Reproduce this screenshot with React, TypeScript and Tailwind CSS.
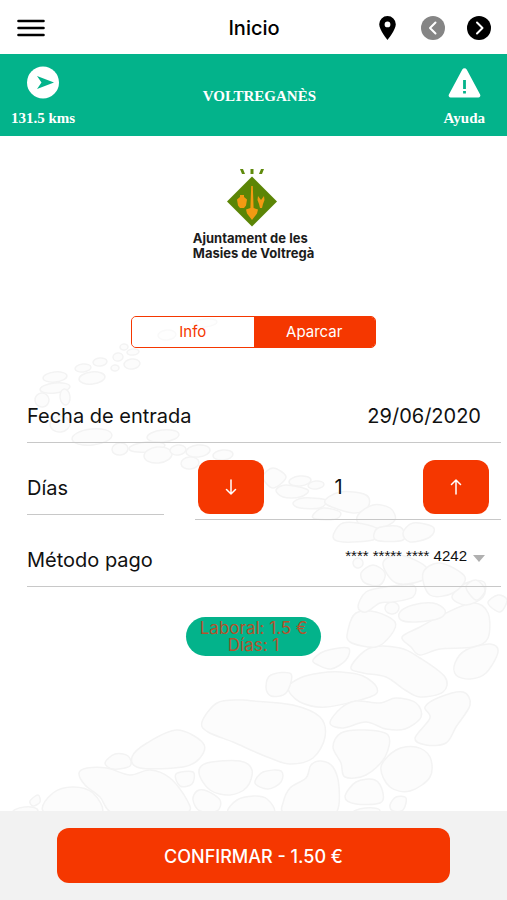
import { useState } from "react";

type Point = [number, number];

// Outlines of the larger stones of the path, as "x,y x,y ..." lists.
const STONES = [
  "288,688 300,678 320,673 341,672 363,676 377,688 370,697 326,707 300,702",
  "351,667 370,648 400,648 420,658 445,677 443,692 420,697 405,690 386,677 363,673",
  "330,723 341,708 356,701 380,703 396,698 416,703 421,717 405,729 386,729 366,722 343,728",
  "202,722 217,703 240,700 254,701 293,705 320,717 325,737 313,758 290,764 270,758 253,751 233,742 208,732",
  "333,747 341,733 363,730 388,735 385,757 366,775 345,777 341,763",
  "381,767 396,750 416,747 430,757 430,777 410,791 390,787",
  "425,707 440,697 463,692 470,705 456,727 446,743 426,745 415,738 430,718",
  "283,803 290,788 306,778 311,765 321,761 333,767 339,787 336,813 310,822 284,813",
  "345,797 356,782 375,780 383,793 380,803 356,804",
  "390,805 396,797 406,798 403,810 393,811",
  "255,783 263,772 281,771 281,782 268,789",
  "266,687 271,675 291,674 286,693 271,696",
  "313,660 325,651 348,648 346,660 331,669 318,665",
  "348,630 356,613 376,612 395,622 391,635 376,647 350,642",
  "402,637 420,627 446,613 473,603 488,613 488,638 473,647 440,649 420,655 411,647",
  "455,663 466,650 490,644 498,652 486,673 470,679 456,675",
  "400,612 413,605 433,603 445,610 440,618 416,622 401,620",
  "358,607 366,592 386,587 413,585 413,597 393,602 380,603 366,612",
  "488,603 498,595 507,600 500,612",
  "452,597 466,583 484,582 483,597 466,605",
  "132,757 147,743 177,730 203,743 200,758 183,767 140,768",
  "105,763 115,754 128,756 130,766 113,769",
  "79,773 87,768 107,768 130,775 150,770 170,778 187,800 187,813 150,822 112,813 100,797 85,785",
  "43,811 53,793 73,787 93,793 102,813 73,822",
  "199,773 207,763 240,761 252,770 247,787 230,795 210,790",
  "193,800 197,791 207,791 220,800 217,811 200,811",
  "176,774 193,772 192,784 180,786",
  "228,813 237,800 254,796 267,799 274,813 250,822",
  "30,801 38,795 40,802 33,806",
  "293,503 303,498 326,500 320,508 300,508",
  "276,490 286,485 308,490 300,497 283,497",
  "263,477 273,468 286,477 273,488",
  "313,515 323,508 340,512 336,519 316,519",
  "325,503 340,492 366,495 368,507 353,513",
  "358,515 373,505 390,508 395,520 380,528 360,525",
  "333,537 343,523 368,525 380,532 373,540 343,542",
  "376,540 378,528 400,527 403,540",
  "403,533 413,523 433,527 430,537 410,542",
  "361,573 373,565 385,573 380,585 365,583",
  "383,563 400,555 426,567 423,580 396,583",
  "423,573 440,563 465,577 453,593 430,595",
  "466,587 476,580 485,590 476,600",
];

// Small far-away stones: centre x, centre y, radius x, radius y.
const PEBBLES = [
  [55, 377, 12, 5], [92, 378, 13, 6], [83, 368, 8, 4], [100, 362, 7, 4],
  [118, 357, 5, 4], [132, 364, 8, 5], [115, 368, 4, 3], [124, 347, 4, 3],
  [133, 352, 6, 3], [167, 335, 9, 5], [55, 388, 15, 5], [42, 400, 7, 7],
  [65, 397, 5, 8], [92, 437, 20, 8], [163, 436, 16, 6], [60, 424, 10, 8],
  [147, 447, 18, 5], [205, 323, 12, 4], [120, 449, 8, 6], [158, 455, 14, 8],
  [178, 450, 8, 5], [198, 451, 12, 6], [190, 463, 9, 6], [223, 455, 10, 5],
  [300, 481, 11, 5], [316, 485, 8, 4], [358, 563, 5, 5], [392, 608, 7, 6],
  [25, 812, 13, 5], [366, 812, 14, 4],
];

// Closed smooth curve through every point.
function smooth(list: string) {
  const p = list.split(" ").map((s) => s.split(",").map(Number) as Point);
  const n = p.length;
  let d = `M${p[0][0]} ${p[0][1]}`;
  for (let i = 0; i < n; i++) {
    const a = p[(i + n - 1) % n];
    const b = p[i];
    const c = p[(i + 1) % n];
    const e = p[(i + 2) % n];
    d += `C${b[0] + (c[0] - a[0]) / 6} ${b[1] + (c[1] - a[1]) / 6} ${c[0] - (e[0] - b[0]) / 6} ${c[1] - (e[1] - b[1]) / 6} ${c[0]} ${c[1]}`;
  }
  return d + "Z";
}

function StonePath() {
  return (
    <svg
      aria-hidden="true"
      viewBox="0 136 507 675"
      preserveAspectRatio="xMidYMax slice"
      className="absolute inset-0 -z-10 h-full w-full"
      fill="#fcfcfc"
      stroke="#f3f3f3"
      strokeWidth="1.5"
    >
      {PEBBLES.map(([x, y, rx, ry], i) => (
        <ellipse key={i} cx={x} cy={y} rx={rx} ry={ry} transform={`rotate(-6 ${x} ${y})`} />
      ))}
      {STONES.map((s) => (
        <path key={s} d={smooth(s)} />
      ))}
    </svg>
  );
}

function Emblem() {
  return (
    <svg aria-hidden="true" width="50" height="59" viewBox="0 0 50 59">
      <path d="M13 1h3l2 5h-3zM23.500 1h3v5h-3zM34 1h3l-2 5h-3z" fill="#5f8a0c" />
      <path d="M25 8.500 50 33.500 25 58.500 0 33.500z" fill="#5b8506" />
      <path d="M24.200 18h1.600l.8 22 4.400 1.500-1 4L25 52l-5-6.500-1-4 4.400-1.500z" fill="#f39a12" />
      <path d="M13 27h4v2l3 2.500-1 6-2 2.500h-4l-2-2.500-1-6 3-2.500z" fill="#f39a12" />
      <path d="m31 28 3 4 3-4 .5 4-1.500 4-1 4h-2l-1-4-1.500-4z" fill="#f39a12" />
    </svg>
  );
}

function Arrow({ up }: { up?: boolean }) {
  return (
    <svg
      aria-hidden="true"
      width="12"
      height="16"
      viewBox="0 0 12 16"
      fill="none"
      stroke="#fff"
      strokeWidth="1.500"
      strokeLinecap="round"
      strokeLinejoin="round"
    >
      <path d={up ? "M6 15V1M1.500 5.500 6 1l4.500 4.500" : "M6 1v14M1.500 10.500 6 15l4.500-4.500"} />
    </svg>
  );
}

function RoundArrow({ color, back }: { color: string; back?: boolean }) {
  return (
    <svg aria-hidden="true" width="24" height="24" viewBox="0 0 24 24">
      <circle cx="12" cy="12" r="12" fill={color} />
      <path
        d={back ? "m14.500 6.500-5.500 5.500 5.500 5.500" : "m10 6.500 5.500 5.500-5.500 5.500"}
        fill="none"
        stroke="#fff"
        strokeWidth="2"
        strokeLinecap="round"
        strokeLinejoin="round"
      />
    </svg>
  );
}

const STEP = "flex h-[54px] w-[66px] items-center justify-center rounded-[12px] bg-[#f53700]";
const ROW = "flex h-[55px] items-center justify-between border-b border-[#c8c8c8] pt-0.5";

export default function App() {
  const [days, setDays] = useState(1);
  const [date, setDate] = useState("29/06/2020");
  const [tab, setTab] = useState("Aparcar");

  return (
    <div className="flex min-h-screen flex-col bg-white font-['Inter',sans-serif] text-[#111]">
      <header className="grid h-[54px] grid-cols-[1fr_auto_1fr] items-center pt-0.5 pr-4 pl-[17px]">
        <button aria-label="Menú" className="justify-self-start">
          <svg aria-hidden="true" width="28" height="18" viewBox="0 0 28 18" stroke="#000" strokeWidth="2.600" strokeLinecap="round">
            <path d="M1.500 2h25M1.500 9h25M1.500 16h25" />
          </svg>
        </button>
        <h1 className="text-[20px] leading-6 font-medium text-black">Inicio</h1>
        <div className="flex items-center justify-self-end">
          <button aria-label="Ubicación" className="mr-[25px]">
            <svg aria-hidden="true" width="17" height="24" viewBox="0 0 17 24">
              <path
                d="M8.500 0A8.300 8.300 0 0 0 .2 8.300C.2 14 8.500 24 8.500 24s8.300-10 8.300-15.700A8.300 8.300 0 0 0 8.500 0zm0 5.500a2.900 2.900 0 1 1 0 5.800 2.900 2.900 0 0 1 0-5.800z"
                fill="#000"
              />
            </svg>
          </button>
          <button aria-label="Anterior" className="mr-[22px]">
            <RoundArrow color="#858585" back />
          </button>
          <button aria-label="Siguiente">
            <RoundArrow color="#000" />
          </button>
        </div>
      </header>

      <section className="grid h-[82px] grid-cols-[auto_1fr_auto] items-center bg-[#03b38b] pt-0.5 pr-[22px] pl-[11px] font-['Liberation_Serif',serif] text-[15px] leading-[18px] font-bold text-white">
        <button className="flex flex-col items-center gap-[10px]">
          <svg aria-hidden="true" width="32" height="33" viewBox="0 0 32 33">
            <circle cx="16" cy="16.500" r="16" fill="#fff" />
            <path d="M10 10 27 16.500 10 23l4.500-6.500z" fill="#03b38b" />
          </svg>
          131.5 kms
        </button>
        <h2 className="text-center">VOLTREGANÈS</h2>
        <button className="flex flex-col items-center gap-[10px]">
          <svg aria-hidden="true" width="33" height="33" viewBox="0 0 33 33">
            <path d="M14.300 3.500a2.500 2.500 0 0 1 4.400 0l13.400 25a2 2 0 0 1-1.800 3H2.700a2 2 0 0 1-1.800-3z" fill="#fff" />
            <path d="M16.500 14v9M16.500 25v2.500" stroke="#03b38b" strokeWidth="2.800" />
          </svg>
          Ayuda
        </button>
      </section>

      <main className="relative isolate flex flex-1 flex-col overflow-hidden pt-8">
        <StonePath />
        <div className="flex flex-col items-center gap-1 pr-1">
          <Emblem />
          <p className="pl-1 text-[13px] leading-[15px] font-bold text-[#1c1c1c]">
            Ajuntament de les
            <br />
            Masies de Voltregà
          </p>
        </div>

        <div className="mt-[55px] grid h-8 w-[245px] grid-cols-2 self-center overflow-hidden rounded-[5px] border border-[#f53700] text-[15px]">
          {["Info", "Aparcar"].map((name) => (
            <button
              key={name}
              aria-pressed={tab === name}
              onClick={() => setTab(name)}
              className={tab === name ? "bg-[#f53700] text-white" : "bg-white/50 text-[#f53700]"}
            >
              {name}
            </button>
          ))}
        </div>

        <form className="mt-10 pr-[6px] pl-[27px] text-[20px]">
          <div className={ROW}>
            <label htmlFor="date">Fecha de entrada</label>
            <input
              id="date"
              value={date}
              onChange={(e) => setDate(e.target.value)}
              className="w-40 bg-transparent pr-5 text-right outline-none"
            />
          </div>
          <div className="mt-[17px] grid grid-cols-[137fr_306fr] items-start gap-[31px]">
            <label htmlFor="days" className={ROW}>
              Días
            </label>
            <div className="flex items-center border-b border-[#c8c8c8] pr-3 pb-[5px] pl-[3px]">
              <button type="button" aria-label="Menos días" className={STEP} onClick={() => setDays(Math.max(1, days - 1))}>
                <Arrow />
              </button>
              <output id="days" className="flex-1 pr-[10px] text-center">
                {days}
              </output>
              <button type="button" aria-label="Más días" className={STEP} onClick={() => setDays(days + 1)}>
                <Arrow up />
              </button>
            </div>
          </div>
          <div className={`${ROW} mt-3`}>
            <label htmlFor="method">Método pago</label>
            <div className="flex items-center gap-[6px] pr-4 pb-2">
              <select
                id="method"
                className="appearance-none bg-transparent text-right font-['Liberation_Sans',sans-serif] text-[15px] leading-5 outline-none"
              >
                <option>**** ***** **** 4242</option>
              </select>
              <svg aria-hidden="true" width="12" height="7" viewBox="0 0 12 7" className="mt-[5px]">
                <path d="M0 0h12L6 7z" fill="#b0b0b0" />
              </svg>
            </div>
          </div>
        </form>

        <p className="mt-[30px] mb-10 self-center rounded-full bg-[#03b38b] px-[14px] pt-[3px] pb-[2px] text-center text-[17px] leading-[17px] text-[#b4522c]">
          Laboral: 1.5 €
          <br />
          Días: 1
        </p>
      </main>

      <footer className="bg-[#f2f2f2] px-[57px] pt-[17px] pb-[17px]">
        <button className="h-[55px] w-full rounded-[12px] bg-[#f53700] pt-0.5 text-[18px] font-medium text-white">
          CONFIRMAR - 1.50 €
        </button>
      </footer>
    </div>
  );
}
